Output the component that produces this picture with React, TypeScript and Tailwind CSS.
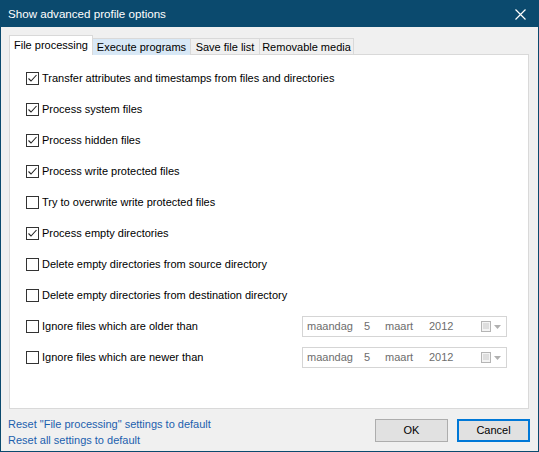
import React from "react";

const font = { fontFamily: '"Liberation Sans", Arial, sans-serif' };

const options: { label: string; checked: boolean; date?: boolean }[] = [
  { label: "Transfer attributes and timestamps from files and directories", checked: true },
  { label: "Process system files", checked: true },
  { label: "Process hidden files", checked: true },
  { label: "Process write protected files", checked: true },
  { label: "Try to overwrite write protected files", checked: false },
  { label: "Process empty directories", checked: true },
  { label: "Delete empty directories from source directory", checked: false },
  { label: "Delete empty directories from destination directory", checked: false },
  { label: "Ignore files which are older than", checked: false, date: true },
  { label: "Ignore files which are newer than", checked: false, date: true },
];

function CheckBox({ checked }: { checked: boolean }) {
  return (
    <div className="w-[13px] h-[13px] border border-[#333333] bg-white flex items-center justify-center shrink-0">
      {checked && (
        <svg width="11" height="11" viewBox="0 0 11 11">
          <polyline points="1.5,5.5 4,8 9.5,2" fill="none" stroke="#222" strokeWidth="1.1" />
        </svg>
      )}
    </div>
  );
}

function DatePicker() {
  return (
    <div className="w-[205px] h-[21px] border border-[#d5d5d5] bg-white flex items-center pl-[4px] pr-[5px] text-[11px] text-[#6d6d6d]">
      <span className="w-[57px]">maandag</span>
      <span className="w-[21px]">5</span>
      <span className="w-[44px]">maart</span>
      <span>2012</span>
      <div className="ml-auto flex items-center gap-[3px]">
        <svg width="10" height="11" viewBox="0 0 10 11">
          <rect x="0.5" y="0.5" width="9" height="10" fill="#f4f4f4" stroke="#b5b5b5" />
          <line x1="2" y1="3" x2="8" y2="3" stroke="#c8c8c8" />
          <line x1="2" y1="5" x2="8" y2="5" stroke="#c8c8c8" />
          <line x1="2" y1="7" x2="8" y2="7" stroke="#c8c8c8" />
        </svg>
        <svg width="7" height="4" viewBox="0 0 7 4">
          <polygon points="0,0 7,0 3.5,4" fill="#b0b0b0" />
        </svg>
      </div>
    </div>
  );
}

export default function App() {
  return (
    <div
      className="w-[539px] h-[452px] border border-[#0b4a6e] bg-[#f0f0f0] flex flex-col text-[11px] text-black"
      style={font}
    >
      <div className="h-[26px] bg-[#0b4a6e] flex items-center justify-between pl-[7px] pr-[12px] text-white shrink-0">
        <span className="text-[11.6px]">Show advanced profile options</span>
        <svg width="11" height="11" viewBox="0 0 11 11">
          <path d="M0.5 0.5 L10.5 10.5 M10.5 0.5 L0.5 10.5" stroke="#fff" strokeWidth="1.2" />
        </svg>
      </div>

      <div className="pl-[8px] pr-[9px] pt-[8px]">
        <div className="flex items-end h-[20px] relative z-10">
          <div className="w-[84px] h-[20px] bg-white border border-[#d9d9d9] border-b-0 flex items-center justify-center">
            File processing
          </div>
          <div className="w-[98px] h-[17px] bg-[#d8e8f6] border-t border-r border-[#d9d9d9] flex items-center justify-center">
            Execute programs
          </div>
          <div className="w-[69px] h-[17px] border-t border-r border-[#d9d9d9] flex items-center justify-center">
            Save file list
          </div>
          <div className="w-[94px] h-[17px] border-t border-r border-[#d9d9d9] flex items-center justify-center">
            Removable media
          </div>
        </div>
        <div className="h-[355px] bg-white border border-[#d9d9d9] -mt-px flex flex-col pt-[8px] pl-[16px] pr-[21px]">
          {options.map((o) => (
            <div key={o.label} className="h-[31px] flex items-center">
              <CheckBox checked={o.checked} />
              <span className="ml-[3px] flex-1">{o.label}</span>
              {o.date && <DatePicker />}
            </div>
          ))}
        </div>
      </div>

      <div className="flex justify-between pl-[7px] pr-[8px] pt-[7px]">
        <div className="flex flex-col text-[#1c5fae] leading-[16px]">
          <span>Reset "File processing" settings to default</span>
          <span>Reset all settings to default</span>
        </div>
        <div className="flex gap-[9px] pt-[3px]">
          <button className="w-[73px] h-[23px] bg-[#e1e1e1] border border-[#adadad]">OK</button>
          <button className="w-[73px] h-[23px] bg-[#e1e1e1] border-2 border-[#0078d7]">Cancel</button>
        </div>
      </div>
    </div>
  );
}
